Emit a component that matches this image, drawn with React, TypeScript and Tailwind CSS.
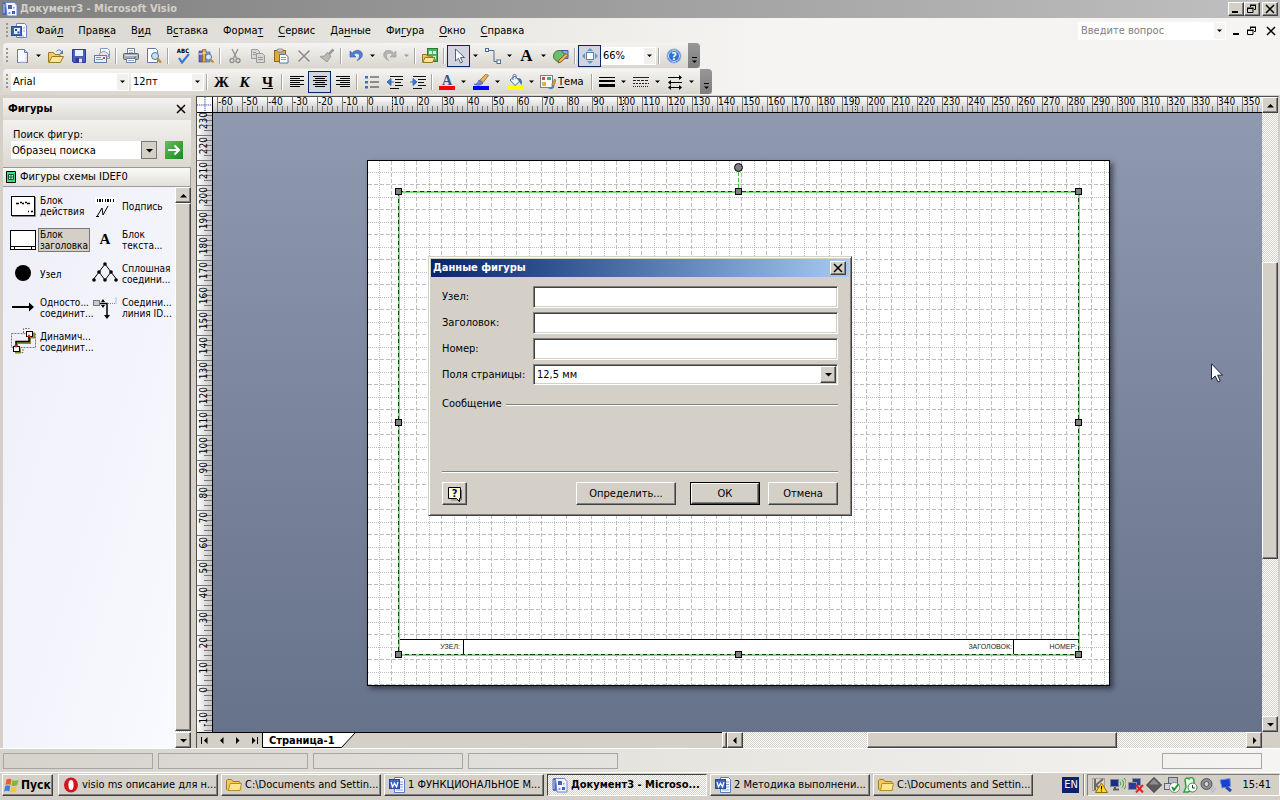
import React from 'react';
import clsx from 'clsx';

const RAISED = 'bg-[#d4d0c8] border border-t-white border-l-white border-r-[#404040] border-b-[#404040] shadow-[inset_-1px_-1px_0_#808080]';
const DITHER = 'bg-[repeating-conic-gradient(#ffffff_0_25%,#d4d0c8_0_50%)] bg-[length:2px_2px]';

/* ---------- Icons ---------- */

const ICONS: Record<string, React.ReactNode> = {
  visio: (
    <>
      <rect x="0.500" y="1" width="11" height="13" rx="2" fill="#4a66bd" />
      <path d="M2 3v9" stroke="#c3cff5" />
      <path d="M3.500 1.500h9l2.500 3v10.500h-10z" fill="#f4f6ff" stroke="#6f86cc" />
      <rect x="6" y="4" width="4" height="4" fill="#4460b4" />
      <rect x="10" y="10" width="3" height="3" fill="#4460b4" />
      <rect x="6.500" y="11" width="2" height="2" fill="#7b93dd" />
      <rect x="11" y="6" width="1.500" height="1.500" fill="#7b93dd" />
    </>
  ),
  visioDoc: (
    <>
      <path d="M5.500 .5h8l2 2v12h-10z" fill="#fff" stroke="#6b84c6" />
      <path d="M12 5h2M12 8h2M8 13h5" stroke="#8ea3da" />
      <rect x="0.500" y="3.500" width="10" height="9" fill="#3d62b6" stroke="#2d4d9a" />
      <rect x="3" y="5" width="6" height="6" fill="#e7edff" />
      <rect x="4" y="6" width="2" height="2" fill="#2d4d9a" />
      <rect x="6.500" y="8.500" width="2" height="2" fill="#2d4d9a" />
    </>
  ),
  page: (
    <>
      <path d="M3.500 1.500h7l3 3v10h-10z" fill="#fff" stroke="#5d7ba8" />
      <path d="M10.500 1.500v3h3" fill="#cbd9ee" stroke="#5d7ba8" />
      <path d="M12 6v8H5" fill="none" stroke="#c3d3ec" />
    </>
  ),
  open: (
    <>
      <path d="M.5 14V4.500h5l1.500 2h5V9" fill="#f0cc62" stroke="#9a7a26" />
      <path d="M.8 14.500 4 8.500h11.500l-3.200 6z" fill="#ffe596" stroke="#9a7a26" />
      <path d="M8.500 3.500c2-2.500 4-2 5 .5" fill="none" stroke="#4b77b5" />
      <path d="M15 2v4h-3.500z" fill="#4b77b5" />
    </>
  ),
  save: (
    <>
      <path d="M1.500 1.500h13v13h-12l-1-1z" fill="#4c5ec4" stroke="#2e3c92" />
      <rect x="4" y="2" width="8" height="6" fill="#eef1fb" />
      <rect x="4.500" y="10" width="7" height="4.500" fill="#2e3c92" />
      <rect x="8" y="10.500" width="3" height="4" fill="#e3e6f5" />
    </>
  ),
  mail: (
    <>
      <path d="M6.500 .5h7l2 2v8h-9z" fill="#fff" stroke="#8499bd" />
      <path d="M5.500 5.500 10 3l4.500 3v3h-9z" fill="#f9e1d6" stroke="#8499bd" />
      <rect x="0.500" y="7.500" width="12" height="7" fill="#e9f0fb" stroke="#5d7ba8" />
      <path d="M2 9.500h5M2 11.500h7" stroke="#7e98c3" />
      <rect x="9" y="9" width="2" height="2" fill="#cf4a35" />
    </>
  ),
  print: (
    <>
      <path d="M4.500 6V.5h7V6" fill="#fff" stroke="#71809c" />
      <path d="M6 2.500h4M6 4.500h4" stroke="#9fb0cb" />
      <rect x="0.500" y="5.500" width="15" height="6" rx="1" fill="#a9adb6" stroke="#5d6470" />
      <path d="M2 7.500h12" stroke="#dcdfe5" />
      <rect x="11" y="8.500" width="2" height="1.500" fill="#43b049" />
      <path d="M3.500 10.500h9v4h-9z" fill="#fff" stroke="#71809c" />
      <path d="M5 12.500h6" stroke="#8fa6d0" />
    </>
  ),
  preview: (
    <>
      <path d="M1.500 .5h8l2 2v12h-10z" fill="#fff" stroke="#5d7ba8" />
      <circle cx="9" cy="8" r="3.500" fill="#c5e3f7" stroke="#53718f" />
      <path d="m11.500 10.800 3.500 3.700" stroke="#c68a2e" strokeWidth="2.500" />
    </>
  ),
  research: (
    <>
      <path d="M1 3h3.500v11H1z" fill="#6f62c7" stroke="#42388c" strokeWidth=".7" />
      <path d="M4.500 1.500H8V14H4.500z" fill="#e7a93f" stroke="#8e6216" strokeWidth=".7" />
      <path d="M8 4h4v10H8z" fill="#86a9e4" stroke="#40639f" strokeWidth=".7" />
      <path d="M1 6h3.500M4.500 5H8" stroke="#fff" />
      <circle cx="10.500" cy="9" r="3" fill="#d7ecfa" stroke="#53718f" />
      <path d="m12.500 11.500 3 3" stroke="#c68a2e" strokeWidth="2" />
    </>
  ),
  cut: (
    <g fill="none" stroke="#8f8f8f" strokeWidth="1.300">
      <path d="M5 1l4.500 9M11 1 6.500 10" />
      <circle cx="5" cy="12.500" r="2" />
      <circle cx="11" cy="12.500" r="2" />
    </g>
  ),
  copy: (
    <g fill="#d6d6d6" stroke="#999">
      <path d="M1.500 1.500h6l2 2v7h-8z" />
      <path d="M6.500 5.500h6l2 2v7h-8z" />
      <path d="M3 4.500h3M3 6.500h3M8 9.500h5M8 11.500h5" />
    </g>
  ),
  paste: (
    <>
      <rect x="1.500" y="2.500" width="11" height="11" fill="#e0a93c" stroke="#8e6a1f" />
      <rect x="4" y="1" width="6" height="3" rx="1" fill="#c9ccd2" stroke="#6a6f79" strokeWidth=".7" />
      <path d="M6.500 6.500h6l2.500 2v6.500H6.500z" fill="#fff" stroke="#5472a8" />
      <path d="M8 9.500h5M8 11.500h5" stroke="#7f9bd0" />
    </>
  ),
  del: <path d="m2.500 2.500 11 11m0-11-11 11" stroke="#8b8b8b" strokeWidth="1.500" />,
  brush: (
    <>
      <path d="m14.500 1.500-5 5" stroke="#999" strokeWidth="2.500" />
      <path d="M8 4.500 12 8l-4 6-7-5.500 4.500-.5z" fill="#b9b9b9" stroke="#9b9b9b" />
    </>
  ),
  undo: <path d="M2 3v6h6L5.700 6.700C8 4.500 11 5 11.500 7.500c.3 2-1 3.500-2.500 5 4-1.500 6-4 5.200-7.200C13 1.800 7.500 1 4.200 5z" fill="#4f7fd0" stroke="#2f5aa8" strokeWidth=".6" />,
  redo: <path d="M14 3v6H8l2.300-2.300C8 4.500 5 5 4.500 7.500c-.3 2 1 3.500 2.500 5C3 11 1 8.500 1.800 5.300 3 1.800 8.500 1 11.800 5z" fill="#b3b3b3" stroke="#9d9d9d" strokeWidth=".6" />,
  shapes: (
    <>
      <rect x="5.500" y="0.500" width="10" height="13" fill="#4db35e" stroke="#257a36" />
      <path d="M7 3h3v3H7zM11 3h3v3h-3zM11 8h3v3h-3z" fill="#d8f2dc" />
      <path d="M.5 14V6.500h4l1 1.500H10V10" fill="#efc554" stroke="#94741f" />
      <path d="m.8 14.500 2.200-5h10l-2.500 5z" fill="#ffe596" stroke="#94741f" />
    </>
  ),
  pointer: <path d="M4.500 1v12l3-2.800 2 4.800 2-1-2-4.500h4z" fill="#fff" stroke="#50617f" />,
  connector: (
    <>
      <path d="M3.500 2.500H9v11h3" fill="none" stroke="#4e6d95" />
      <rect x="0.500" y="0.500" width="3" height="3" fill="#fff" stroke="#4e6d95" />
      <rect x="12" y="12" width="3.500" height="3.500" fill="#fff" stroke="#4e6d95" />
    </>
  ),
  drawing: (
    <>
      <path d="M8 2.500h7v8H8z" fill="#8aa7e0" stroke="#3b5ca5" />
      <circle cx="6" cy="8" r="5.500" fill="#6bbd70" stroke="#2e7f36" />
      <path d="m5 15 1-3 7-6.500 2 2L8 14z" fill="#edb660" stroke="#8b5d1e" />
    </>
  ),
  pan: (
    <g fill="#5f97cf">
      <rect x="4.500" y="4.500" width="7" height="7" fill="#fff" stroke="#5f7da5" />
      <path d="M8 0l3 3H5zM8 16l3-3H5zM0 8l3-3v6zM16 8l-3-3v6z" />
    </g>
  ),
  bullets: (
    <>
      <path d="M6 3h9M6 8h9M6 13h9" stroke="#333" />
      <path d="M1 2h3v2.500H1zM1 7h3v2.500H1zM1 12h3v2.500H1z" fill="#3d6fc0" />
    </>
  ),
  outdent: (
    <>
      <path d="M3 2.500h13M8 5.500h8M8 8.500h6M8 11.500h8M3 14.500h9" stroke="#111" />
      <path d="M0 8 4 4.500v7zM3 8h4" fill="#3974c8" stroke="#3974c8" />
    </>
  ),
  indent: (
    <>
      <path d="M3 2.500h13M8 5.500h8M8 8.500h6M8 11.500h8M3 14.500h9" stroke="#111" />
      <path d="M7 8 3 4.500v7zM0 8h4" fill="#3974c8" stroke="#3974c8" />
    </>
  ),
  lineColor: (
    <>
      <path d="M1 10c2 1 4-1 5-4l4 3c-2 2.500-6 3-9 1z" fill="#5d8fd8" stroke="#2c5390" strokeWidth=".6" />
      <path d="m7 6 6-6 2.500 1.500-5.500 7z" fill="#e7b25a" stroke="#7c602b" strokeWidth=".7" />
      <rect y="12" width="16" height="4" fill="#00f" />
    </>
  ),
  fill: (
    <>
      <path d="m3 6 5-4 5 5-5 4.500z" fill="#eef3fa" stroke="#54709b" />
      <path d="M6 6V1.500c0-1.500 3-1.500 3 0V5" fill="none" stroke="#54709b" />
      <path d="M12 4c3 1 3.500 4 2.500 7C13 9 13 8 10 5z" fill="#3c70c0" />
      <rect y="12" width="16" height="4" fill="#ff0" />
    </>
  ),
  theme: (
    <>
      <rect x="0.500" y="1.500" width="12" height="12" fill="#fff" stroke="#69809f" />
      <rect x="2" y="3" width="3" height="3" fill="#d94b3a" />
      <rect x="7" y="3" width="4" height="3" fill="#58a85c" />
      <rect x="2" y="8" width="4" height="4" fill="#e5b143" />
      <path d="M7 14c2 1 4 .5 5-3l2.500 1.500c-1 3-5 3.500-7.500 1.500z" fill="#4c80cf" />
      <path d="m11.500 11 3-6 1.500 1-2 6z" fill="#d99d43" stroke="#7c602b" strokeWidth=".5" />
    </>
  ),
  lineWeight: (
    <g fill="#000">
      <rect x="0" y="3" width="16" height="1" />
      <rect x="0" y="6" width="16" height="2" />
      <rect x="0" y="10" width="16" height="3" />
    </g>
  ),
  linePattern: (
    <g stroke="#222">
      <path d="M0 3.500h16" />
      <path d="M0 6.500h16" strokeDasharray="3 1" />
      <path d="M0 9.500h16" strokeDasharray="2 1" />
      <path d="M0 12.500h16" strokeDasharray="1 1" />
    </g>
  ),
  lineEnds: (
    <g stroke="#000" fill="#000">
      <path d="M1 3.500h13M2 8.500h13M2 13.500h12" />
      <path d="m12 1 3 2.500L12 6zM4 6 1 8.500 4 11zM4 11l-3 2.500L4 16zM12 11l3 2.500-3 2.500z" stroke="none" />
    </g>
  ),
  word: (
    <>
      <path d="M5.500 .5h8l2 2v13h-10z" fill="#fff" stroke="#5c7dbd" />
      <path d="M11 5h3M11 7.500h3M11 10h3M7 13h7" stroke="#7e9bd3" />
      <rect x="0.500" y="2.500" width="10" height="9" fill="#3d69bc" stroke="#27498f" />
      <path d="m2 5 1.500 5L5.500 6l2 4L9 5" fill="none" stroke="#fff" strokeWidth="1.200" />
    </>
  ),
  folder: (
    <>
      <path d="M.5 12V3.500l1-1h4l1.500 2h6.500l.5 1v8h-12z" fill="#f3cb55" stroke="#a37c1d" />
      <path d="M2.500 13.500 4 6.500h11.500l-1.500 7z" fill="#ffe68c" stroke="#b58d2a" />
    </>
  ),
  opera: (
    <>
      <ellipse cx="8" cy="8" rx="7" ry="7.500" fill="#d3131d" />
      <ellipse cx="8" cy="8" rx="2.600" ry="5" fill="#fff" />
    </>
  ),
  windows: (
    <>
      <path d="M2.500 2.500C4 1.500 6 1.500 7.500 2.500L6.500 8C5 7 3 7 1.500 8z" fill="#ea5b2d" />
      <path d="M8.500 3C10 4 12 4 14.500 2.800L13.300 8.200c-2 1-4 1-5.800.2z" fill="#7db83b" />
      <path d="M1.300 9c1.500-1 3.500-1 5 0l-1 5.500c-1.500-1-3.500-1-5.200 0z" fill="#3f7fe0" />
      <path d="M7.300 9.400c1.500.9 3.500.9 5.700-.2l-1.200 5.500c-2 1-4 1-5.500.2z" fill="#f6c82f" />
    </>
  ),
  trayK: (
    <>
      <rect x="0.500" y="1.500" width="12" height="12" fill="#d8d5ce" stroke="#a5a29a" />
      <path d="M3 2v11M11 2 4 8l5 5" stroke="#6c6a66" strokeWidth="2" fill="none" />
      <path d="M9.500 6 15.500 15.500h-12z" fill="#ffd52e" stroke="#8b6e0b" />
      <path d="M9.500 9v3.500M9.500 13.500v1" stroke="#000" />
    </>
  ),
  trayNet: (
    <>
      <rect x="0.500" y="2.500" width="8" height="7" fill="#1b2f88" stroke="#7f8593" />
      <path d="M3 12.500h6M5 10v2" stroke="#5a6070" strokeWidth="2" />
      <path d="M10 4.500c1 1 1 3 0 4M12 2.500c2 2 2 6 0 8M14 1c3 3 3 8 0 11" fill="none" stroke="#2ca334" />
    </>
  ),
  trayOff: (
    <>
      <rect x="4.500" y="1.500" width="8" height="7" fill="#2a3b9a" stroke="#8b90a0" />
      <rect x="0.500" y="5.500" width="8" height="7" fill="#2a3b9a" stroke="#8b90a0" />
      <path d="m8 8 7 7.500M15 8l-7 7.500" stroke="#e0231d" strokeWidth="2" />
    </>
  ),
  trayDiamond: (
    <>
      <path d="m8 .5 7.500 7.500L8 15.500.5 8z" fill="#5b5b5b" stroke="#3a3a3a" />
      <path d="m8 2 5 5.500H3z" fill="#8e8e8e" />
    </>
  ),
  trayCheck: (
    <>
      <rect x="4.500" y="0.500" width="9" height="8" fill="#b8bcc4" stroke="#5f636c" />
      <rect x="0.500" y="6.500" width="8" height="6" fill="#d5d7dc" stroke="#5f636c" />
      <circle cx="10.500" cy="10.500" r="5" fill="#fff" stroke="#888" />
      <path d="m8 10 2 3 4.500-6" fill="none" stroke="#1e9a2a" strokeWidth="2" />
    </>
  ),
  trayClock: (
    <>
      <path d="M3 3c1-3 3-2 4-1 1-2 4-2 5 1v3c-1 5-3 8-6 9H2l2-5z" fill="#e9f8ea" stroke="#2ba33b" strokeWidth="1.500" />
      <circle cx="10.500" cy="10.500" r="4.500" fill="#fff" stroke="#2a8f3b" />
      <path d="M10.500 8v3h2.500" fill="none" stroke="#333" />
    </>
  ),
  traySound: (
    <>
      <circle cx="6.500" cy="7" r="5.500" fill="#8d8f94" stroke="#55575c" />
      <circle cx="6.500" cy="7" r="2.500" fill="#d5d6d9" stroke="#55575c" />
      <path d="M10 13c2-.5 3-2 3.500-4M11.500 15c2-.5 3.500-2 4-4" fill="none" stroke="#9fa8d8" />
    </>
  ),
  trayPc: (
    <>
      <path d="m2 3 10-1.500.5 8L4 11z" fill="#1741d2" stroke="#7f93d6" />
      <path d="m8 10 5 4" stroke="#2947b5" strokeWidth="3" />
    </>
  ),
};

const Icon: React.FC<{ name: string; className?: string }> = ({ name, className }) => (
  <svg viewBox="0 0 16 16" className={clsx('size-4 shrink-0', className)} aria-hidden="true">
    {ICONS[name]}
  </svg>
);

const Arrow: React.FC<{ dir?: 'up' | 'down' | 'left' | 'right'; small?: boolean; color?: string }> = ({ dir = 'down', small, color = '#000' }) => {
  const paths = { down: 'M0 2h7L3.500 5.500z', up: 'M0 5.500h7L3.500 2z', left: 'M5.500 0v7L2 3.500z', right: 'M2 0v7l3.500-3.500z' };
  return (
    <svg viewBox="0 0 7 7" className={clsx('shrink-0', small ? 'size-[5px]' : 'size-[7px]')} aria-hidden="true">
      <path d={paths[dir]} fill={color} />
    </svg>
  );
};

/* ---------- Toolbar parts ---------- */

const Tool: React.FC<{ label: string; active?: boolean; children: React.ReactNode }> = ({ label, active, children }) => (
  <button
    aria-label={label}
    className={clsx('flex h-[22px] w-[23px] shrink-0 items-center justify-center', active && 'border border-[#0a246a] bg-[#d2d5df]')}
  >
    {children}
  </button>
);

const Drop: React.FC<{ label: string; disabled?: boolean }> = ({ label, disabled }) => (
  <button aria-label={label} className="flex h-[22px] w-[11px] shrink-0 items-center justify-center">
    <Arrow small color={disabled ? '#999' : '#000'} />
  </button>
);

const Sep = () => <div className="mx-[2px] h-4 w-[2px] shrink-0 border-l border-[#a6a6a6] border-r border-r-white" />;

const Grip = () => (
  <div className="ml-[3px] mr-[2px] h-4 w-[2px] shrink-0 bg-[repeating-linear-gradient(#9a978f_0_2px,transparent_2px_4px)]" />
);

const Overflow = () => (
  <button aria-label="Параметры панели" className="ml-[3px] flex h-[25px] w-[12px] shrink-0 flex-col items-center justify-end gap-px rounded-r bg-linear-to-b from-[#979797] to-[#7d7d7d] pb-1">
    <span className="h-px w-[5px] bg-black" />
    <Arrow small />
  </button>
);

interface ComboProps {
  label: string;
  value: string;
  className?: string;
}

const Combo: React.FC<ComboProps> = ({ label, value, className }) => (
  <div className={clsx('relative h-[18px] shrink-0 bg-white', className)}>
    <select aria-label={label} className="h-full w-full appearance-none bg-transparent pl-[2px] outline-none">
      <option>{value}</option>
    </select>
    <span className="pointer-events-none absolute inset-y-px right-px flex w-[11px] items-center justify-center bg-[#f1f0ed]">
      <Arrow small />
    </span>
  </div>
);

const toolbarClass = 'flex h-[25px] w-fit items-center rounded-l bg-linear-to-b from-[#f5f4f2] to-[#d9d6ce]';

const MENU: [string, string, string][] = [
  ['Фай', 'л', ''],
  ['Прав', 'к', 'а'],
  ['В', 'и', 'д'],
  ['В', 'с', 'тавка'],
  ['Форма', 'т', ''],
  ['', 'С', 'ервис'],
  ['Да', 'н', 'ные'],
  ['Фи', 'г', 'ура'],
  ['', 'О', 'кно'],
  ['', 'С', 'правка'],
];

const MinimizeGlyph = () => <svg viewBox="0 0 10 10" className="size-[10px]"><path d="M1 7h6v2H1z" /></svg>;
const RestoreGlyph = () => (
  <svg viewBox="0 0 10 10" className="size-[10px]">
    <path d="M3.500 3V1.500h5v4H7M.5 4.500h5.500v4H.5z" fill="none" stroke="#000" />
    <path d="M3 .5h6v1.500H3zM0 3.500h6.500V5H0z" />
  </svg>
);
const CloseGlyph = () => <svg viewBox="0 0 10 10" className="size-[10px]"><path d="m1 1 8 8m0-8-8 8" stroke="#000" strokeWidth="1.500" /></svg>;

const TitleBar = () => (
  <header className="flex h-[18px] shrink-0 items-center bg-linear-to-r from-[#808080] to-[#c0c0c0] pl-[2px] pr-[2px]">
    <Icon name="visio" />
    <h1 className="ml-[2px] flex-1 font-bold text-[#d4d0c8]">Документ3 - Microsoft Visio</h1>
    <button aria-label="Свернуть" className={clsx(RAISED, 'flex h-[14px] w-4 items-center justify-center')}><MinimizeGlyph /></button>
    <button aria-label="Восстановить" className={clsx(RAISED, 'flex h-[14px] w-4 items-center justify-center')}><RestoreGlyph /></button>
    <button aria-label="Закрыть" className={clsx(RAISED, 'ml-[2px] flex h-[14px] w-4 items-center justify-center')}><CloseGlyph /></button>
  </header>
);

const MenuBar = () => (
  <nav className="flex h-[25px] shrink-0 items-center pl-[3px]">
    <Grip />
    <Icon name="visioDoc" className="ml-px" />
    <div className="flex flex-1 gap-px pl-[2px]">
      {MENU.map(([a, b, c]) => (
        <button key={a + b + c} className="px-[7px]">
          {a}<span className="underline underline-offset-2">{b}</span>{c}
        </button>
      ))}
    </div>
    <div className="relative h-[18px] w-[148px] bg-white">
      <input aria-label="Введите вопрос" placeholder="Введите вопрос" className="h-full w-full bg-transparent pl-[3px] outline-none placeholder:text-[#808080]" />
      <span className="pointer-events-none absolute inset-y-px right-px flex w-[11px] items-center justify-center bg-[#f5f4f2]">
        <Arrow small />
      </span>
    </div>
    <div className="flex gap-[3px] pl-[5px] pr-[3px]">
      <button aria-label="Свернуть документ" className="p-px"><MinimizeGlyph /></button>
      <button aria-label="Восстановить документ" className="p-px"><RestoreGlyph /></button>
      <button aria-label="Закрыть документ" className="py-px pl-[5px] pr-px"><CloseGlyph /></button>
    </div>
  </nav>
);

const StandardToolbar = () => (
  <div className={toolbarClass}>
    <Grip />
    <Tool label="Создать"><Icon name="page" /></Tool>
    <Drop label="Создать: список" />
    <Tool label="Открыть"><Icon name="open" /></Tool>
    <Tool label="Сохранить"><Icon name="save" /></Tool>
    <Tool label="Сообщение"><Icon name="mail" /></Tool>
    <Sep />
    <Tool label="Печать"><Icon name="print" /></Tool>
    <Tool label="Просмотр"><Icon name="preview" /></Tool>
    <Sep />
    <Tool label="Орфография">
      <svg viewBox="0 0 16 16" className="size-4">
        <text x="8" y="5" fontSize="6" fontWeight="bold" textAnchor="middle">ABC</text>
        <path d="m4 10 3 4.500L14 6" fill="none" stroke="#3c76cf" strokeWidth="2.200" />
      </svg>
    </Tool>
    <Tool label="Справочные материалы"><Icon name="research" /></Tool>
    <Sep />
    <Tool label="Вырезать"><Icon name="cut" /></Tool>
    <Tool label="Копировать"><Icon name="copy" /></Tool>
    <Tool label="Вставить"><Icon name="paste" /></Tool>
    <Tool label="Удалить"><Icon name="del" /></Tool>
    <Tool label="Формат по образцу"><Icon name="brush" /></Tool>
    <Sep />
    <Tool label="Отменить"><Icon name="undo" /></Tool>
    <Drop label="Отменить: список" />
    <Tool label="Вернуть"><Icon name="redo" /></Tool>
    <Drop label="Вернуть: список" disabled />
    <Sep />
    <Tool label="Фигуры"><Icon name="shapes" /></Tool>
    <Sep />
    <Tool label="Указатель" active><Icon name="pointer" /></Tool>
    <Drop label="Указатель: список" />
    <Tool label="Соединительная линия"><Icon name="connector" /></Tool>
    <Drop label="Соединительная линия: список" />
    <Tool label="Текст"><span className="font-['Liberation_Serif',serif] text-[17px] font-bold leading-4">A</span></Tool>
    <Drop label="Текст: список" />
    <Tool label="Рисование"><Icon name="drawing" /></Tool>
    <Sep />
    <Tool label="Панорама" active><Icon name="pan" /></Tool>
    <Combo label="Масштаб" value="66%" className="w-[55px]" />
    <Sep />
    <Tool label="Справка">
      <svg viewBox="0 0 16 16" className="size-4">
        <circle cx="8" cy="8" r="7" fill="#2f6fd0" stroke="#9ab8e6" />
        <circle cx="8" cy="8" r="5.500" fill="none" stroke="#fff" strokeWidth=".8" />
        <text x="8" y="12" fontSize="11" fontWeight="bold" textAnchor="middle" fill="#fff">?</text>
      </svg>
    </Tool>
    <Overflow />
  </div>
);

const AlignIcon: React.FC<{ d: string }> = ({ d }) => (
  <svg viewBox="0 0 16 16" className="size-4"><path d={d} stroke="#000" shapeRendering="crispEdges" /></svg>
);

const FormatToolbar = () => (
  <div className={toolbarClass}>
    <Grip />
    <Combo label="Шрифт" value="Arial" className="mx-px w-[118px]" />
    <Combo label="Размер" value="12пт" className="ml-px w-[73px]" />
    <Sep />
    <Tool label="Полужирный"><span className="font-['Liberation_Serif',serif] text-[15px] font-bold">Ж</span></Tool>
    <Tool label="Курсив"><span className="font-['Liberation_Serif',serif] text-[15px] font-bold italic">К</span></Tool>
    <Tool label="Подчеркнутый"><span className="font-['Liberation_Serif',serif] text-[15px] font-bold underline">Ч</span></Tool>
    <Sep />
    <Tool label="По левому краю"><AlignIcon d="M1 2.500h14M1 4.500h10M1 6.500h14M1 8.500h10M1 10.500h14M1 12.500h10" /></Tool>
    <Tool label="По центру" active><AlignIcon d="M1 2.500h14M3 4.500h10M1 6.500h14M3 8.500h10M1 10.500h14M3 12.500h10" /></Tool>
    <Tool label="По правому краю"><AlignIcon d="M1 2.500h14M5 4.500h10M1 6.500h14M5 8.500h10M1 10.500h14M5 12.500h10" /></Tool>
    <Sep />
    <Tool label="Маркеры"><Icon name="bullets" /></Tool>
    <Tool label="Уменьшить отступ"><Icon name="outdent" /></Tool>
    <Tool label="Увеличить отступ"><Icon name="indent" /></Tool>
    <Sep />
    <Tool label="Цвет текста">
      <svg viewBox="0 0 16 16" className="size-4">
        <text x="8" y="11" fontSize="14" fontWeight="bold" textAnchor="middle" fill="#32558f" className="font-['Liberation_Serif',serif]">A</text>
        <rect y="12" width="16" height="4" fill="#f00" />
      </svg>
    </Tool>
    <Drop label="Цвет текста: список" />
    <Tool label="Цвет линии"><Icon name="lineColor" /></Tool>
    <Drop label="Цвет линии: список" />
    <Tool label="Цвет заливки"><Icon name="fill" /></Tool>
    <Drop label="Цвет заливки: список" />
    <button className="flex h-[22px] w-[52px] items-center gap-[2px] pl-[3px]">
      <Icon name="theme" />
      <span><span className="underline underline-offset-2">Т</span>ема</span>
    </button>
    <Sep />
    <Tool label="Толщина линии"><Icon name="lineWeight" /></Tool>
    <Drop label="Толщина линии: список" />
    <Tool label="Тип линии"><Icon name="linePattern" /></Tool>
    <Drop label="Тип линии: список" />
    <Tool label="Концы линии"><Icon name="lineEnds" /></Tool>
    <Drop label="Концы линии: список" />
    <Overflow />
  </div>
);

/* ---------- Shapes panel ---------- */

interface ShapeItem {
  lines: string[];
  selected?: boolean;
  art: React.ReactNode;
}

const SHAPES: ShapeItem[] = [
  {
    lines: ['Блок', 'действия'],
    art: (
      <>
        <rect x="1.500" y="4.500" width="23" height="19" fill="#fff" stroke="#000" />
        <path d="M2 24.500h23.500V5" fill="none" stroke="#888" />
        <path d="M6 11.500h3m1-1h2m0 1h2m1-1h2m0 1h3M18 19.500h1m2 0h2" stroke="#000" strokeWidth="1.500" />
      </>
    ),
  },
  {
    lines: ['Подпись'],
    art: (
      <>
        <path d="M3 5h21v7H3z" fill="#fff" />
        <path d="M5 8.500h18" stroke="#000" strokeWidth="3" strokeDasharray="1 1 2 1 1 2" />
        <path d="M5 24.500 10 16l1 7 5-9M4 24.500h3" fill="none" stroke="#000" />
      </>
    ),
  },
  {
    lines: ['Блок', 'заголовка'],
    selected: true,
    art: (
      <>
        <rect x="0.500" y="4.500" width="25" height="19" fill="#fff" stroke="#000" />
        <path d="M1 20.500h24M4.500 20v4M21.500 20v4" stroke="#000" />
      </>
    ),
  },
  {
    lines: ['Блок', 'текста...'],
    art: <text x="13" y="18" fontSize="15" fontWeight="bold" textAnchor="middle" className="font-['Liberation_Serif',serif]">A</text>,
  },
  { lines: ['Узел'], art: <circle cx="13" cy="13" r="8" /> },
  {
    lines: ['Сплошная', 'соедини...'],
    art: (
      <>
        <path d="M13 4 1 20M13 4l12 16M7 12l6 8M19 12l-6 8" stroke="#000" fill="none" />
        {[[13, 4], [7, 12], [19, 12], [2, 20], [13, 20], [24, 20]].map(([x, y]) => <circle key={`${x}-${y}`} cx={x} cy={y} r="1.800" />)}
      </>
    ),
  },
  {
    lines: ['Односто...', 'соединит...'],
    art: <path d="M2 12h17V8.500l5 4.500-5 4.500V14H2z" />,
  },
  {
    lines: ['Соедини...', 'линия ID...'],
    art: (
      <>
        <rect x="1.500" y="6.500" width="6" height="5" fill="#ccc" stroke="#777" />
        <path d="M16 9.500h8V3" fill="none" stroke="#888" strokeDasharray="1 1" />
        <path d="M8 9.500h7V23" fill="none" stroke="#000" strokeWidth="1.500" />
        <path d="m12 21 3 4 3-4zM9 8l2-3 2 3zM9 11l2 3 2-3z" />
      </>
    ),
  },
  {
    lines: ['Динамич...', 'соединит...'],
    art: (
      <>
        <path d="M1.500 5.500h24v14h-24zM13.500 5V.5h6M7 20v4.500h6V20" fill="none" stroke="#777" strokeDasharray="2 1" />
        <path d="M20 9v6H7v4" fill="none" stroke="#8a8a30" strokeWidth="2" />
        <path d="M18 4.500h7v6h-7zM5 20.500h6v5H5z" fill="#8a8a30" />
        <path d="M19 8v5.500H6V19" fill="none" stroke="#000" strokeWidth="1.500" />
        <rect x="16.500" y="3.500" width="6" height="5" fill="#fff" stroke="#000" />
        <rect x="3.500" y="18.500" width="6" height="5" fill="#fff" stroke="#000" />
        <path d="m17 9 2-3 2 3zM4 17h4l-2 3z" fill="#e02020" />
      </>
    ),
  },
];

interface ScrollButtonProps {
  dir: 'up' | 'down' | 'left' | 'right';
  label: string;
}

const ScrollButton: React.FC<ScrollButtonProps> = ({ dir, label }) => (
  <button aria-label={label} className={clsx(RAISED, 'flex size-4 shrink-0 items-center justify-center')}>
    <Arrow dir={dir} />
  </button>
);

const ShapesPanel = () => (
  <aside className="ml-[3px] mt-[3px] flex w-[188px] shrink-0 flex-col">
    <div className="flex h-[22px] shrink-0 items-center justify-between bg-linear-to-b from-[#f5f4f2] to-[#dedbd4] px-[5px]">
      <h2 className="font-bold">Фигуры</h2>
      <button aria-label="Закрыть панель"><CloseGlyph /></button>
    </div>
    <div className="flex h-[47px] shrink-0 flex-col bg-linear-to-b from-[#f2f1ee] to-[#dbd8d1] px-2 pt-2">
      <label htmlFor="shape-search" className="pl-[2px] leading-[13px]">Поиск фигур:</label>
      <div className="flex items-center">
        <div className="relative h-[18px] w-[146px] bg-white">
          <input id="shape-search" defaultValue="Образец поиска" className="h-full w-full bg-transparent pl-px pr-4 outline-none" />
          <span className="pointer-events-none absolute inset-y-0 right-0 flex w-4 items-center justify-center border border-[#777] bg-[#d4d0c8]">
            <Arrow />
          </span>
        </div>
        <button aria-label="Найти" className="ml-2 flex size-[18px] items-center justify-center bg-linear-to-br from-[#5ec25c] to-[#118a1d]">
          <svg viewBox="0 0 14 14" className="size-[14px]"><path d="M1 7h11M7.500 2.500 12 7l-4.500 4.500" fill="none" stroke="#fff" strokeWidth="2" /></svg>
        </button>
      </div>
    </div>
    <button className="flex h-5 shrink-0 items-center gap-1 border-b border-r border-t border-[#999] bg-linear-to-b from-[#fafaf9] to-[#e2e0da] pl-[3px]">
      <svg viewBox="0 0 10 12" className="h-3 w-[10px]">
        <path d="M.5 .5h9v11h-9z" fill="#3fe07c" stroke="#000" />
        <path d="M2.500 3.500h5v5h-5zM5 3.500v5M2 6h6" fill="#d5f7e0" stroke="#0a5a2a" />
      </svg>
      Фигуры схемы IDEF0
    </button>
    <div className="flex min-h-0 flex-1">
      <ul className="grid flex-1 auto-rows-[34px] grid-cols-[82px_1fr] content-start overflow-hidden bg-linear-to-br from-[#eeeef8] to-[#f8fafe] pl-[7px] pt-[2px]">
        {SHAPES.map((shape) => (
          <li key={shape.lines.join(' ')} className="flex items-center gap-[2px]">
            <svg viewBox="0 0 26 28" className="h-7 w-[26px] shrink-0" aria-hidden="true">{shape.art}</svg>
            <span className={clsx('whitespace-nowrap border px-px text-[10px] leading-[11px]', shape.selected ? 'border-[#777] bg-[#d4d0c8]' : 'border-transparent')}>
              {shape.lines.map((line) => <span key={line} className="block">{line}</span>)}
            </span>
          </li>
        ))}
      </ul>
      <div className={clsx('flex w-4 flex-col', DITHER)}>
        <ScrollButton dir="up" label="Прокрутить фигуры вверх" />
        <div className={clsx(RAISED, 'mb-px flex-1')} />
        <ScrollButton dir="down" label="Прокрутить фигуры вниз" />
      </div>
    </div>
  </aside>
);

/* ---------- Rulers ---------- */

const STEP = 25;

const HorizontalRuler = () => {
  const zero = 154;
  const marks = Array.from({ length: 42 }, (_, i) => i - 6);
  const ticks = Array.from({ length: 210 }, (_, i) => zero - 150 + i * 5);
  return (
    <div className="h-4 min-w-0 flex-1 overflow-hidden border-b border-black bg-linear-to-b from-white to-[#c4c4c4]">
      <svg className="h-4 w-full" shapeRendering="crispEdges">
        {ticks.map((x) => <path key={x} d={`M${x + 0.5} 9v6`} stroke="#777" />)}
        {marks.map((n) => (
          <g key={n}>
            <path d={`M${zero + n * STEP + 0.5} 0v15`} stroke="#777" />
            <text x={zero + n * STEP + 1} y="8" fontSize="10">{n * 10}</text>
          </g>
        ))}
        <path d="M410.500 0v15M642.500 0v15M179.500 0v15" stroke="#000" strokeDasharray="1 2" />
      </svg>
    </div>
  );
};

const VerticalRuler = () => {
  const zero = 572;
  const marks = Array.from({ length: 25 }, (_, i) => i - 1);
  const ticks = Array.from({ length: 160 }, (_, i) => zero + 100 - i * 5);
  return (
    <div className="w-4 shrink-0 overflow-hidden border-r border-black bg-linear-to-r from-white to-[#c4c4c4]">
      <svg className="h-full w-4" shapeRendering="crispEdges">
        {ticks.map((y) => <path key={y} d={`M7 ${y + 0.5}h9`} stroke="#777" />)}
        {marks.map((n) => (
          <g key={n}>
            <path d={`M0 ${zero - n * STEP + 0.5}h16`} stroke="#777" />
            <text transform={`translate(10 ${zero - n * STEP + 2}) rotate(-90)`} fontSize="10" textAnchor="end">{n * 10}</text>
          </g>
        ))}
      </svg>
    </div>
  );
};

/* ---------- Drawing page ---------- */

const HANDLES = [[30, 30], [370, 30], [710, 30], [30, 261], [710, 261], [30, 493], [370, 493], [710, 493]];

const DrawingPage = () => (
  <svg className="absolute left-[154px] top-[47px] h-[526px] w-[743px] shadow-[3px_3px_5px_rgba(20,25,40,0.6)]" viewBox="0 0 743 526" role="img" aria-label="Страница-1">
    <g shapeRendering="crispEdges">
      <rect x="0.500" y="0.500" width="742" height="525" fill="#fff" stroke="#000" />
      {Array.from({ length: 59 }, (_, i) => {
        const x = Math.floor(12 + i * 12.5) + 0.5;
        return <path key={x} d={`M${x} 1v524`} stroke="#bdbdbd" strokeDasharray={i % 2 ? '4 2' : '1 1'} />;
      })}
      {Array.from({ length: 42 }, (_, i) => {
        const y = Math.floor(12 + i * 12.5) + 0.5;
        return <path key={y} d={`M1 ${y}h741`} stroke="#bdbdbd" strokeDasharray={i % 2 ? '4 2' : '1 1'} />;
      })}
      <rect x="31" y="479" width="680" height="15" fill="#fff" />
      <path d="M31 479.500h680M96.500 479v15M646.500 479v15" stroke="#000" />
      <rect x="31.500" y="31.500" width="680" height="463" fill="none" stroke="#7fdc83" strokeWidth="2" />
      <rect x="31.500" y="31.500" width="680" height="463" fill="none" stroke="#123f16" strokeDasharray="4 3" />
      <path d="M371.500 12v16" stroke="#3dc445" strokeDasharray="4 2" />
    </g>
    <g className="font-['Liberation_Sans',Arial,sans-serif]" fontSize="7" textAnchor="end" fill="#222">
      <text x="93" y="489">УЗЕЛ:</text>
      <text x="645" y="489">ЗАГОЛОВОК:</text>
      <text x="710" y="489">НОМЕР:</text>
    </g>
    {HANDLES.map(([x, y]) => (
      <rect key={`${x}-${y}`} x={x - 1.5} y={y - 1.5} width="6" height="6" fill="#808080" stroke="#000" />
    ))}
    <circle cx="371.500" cy="7.500" r="4" fill="#808080" stroke="#000" />
  </svg>
);

/* ---------- Shape data dialog ---------- */

const SUNKEN = 'border border-t-[#808080] border-l-[#808080] border-r-white border-b-white shadow-[inset_1px_1px_0_#404040,inset_-1px_-1px_0_#d4d0c8]';

const FIELDS = [
  { id: 'node', label: 'Узел:' },
  { id: 'title', label: 'Заголовок:' },
  { id: 'number', label: 'Номер:' },
];

const ShapeDataDialog = () => (
  <div role="dialog" aria-labelledby="dialog-title" className="absolute left-[215px] top-[143px] w-[424px] border border-b-[#404040] border-l-[#d4d0c8] border-r-[#404040] border-t-[#d4d0c8] bg-[#d4d0c8] p-[2px] shadow-[inset_1px_1px_0_#fff,inset_-1px_-1px_0_#808080]">
    <div className="flex h-[18px] items-center justify-between bg-linear-to-r from-[#0a246a] to-[#a6caf0] pl-[2px] pr-[3px]">
      <h2 id="dialog-title" className="font-bold text-white">Данные фигуры</h2>
      <button aria-label="Закрыть" className={clsx(RAISED, 'flex h-[14px] w-4 items-center justify-center')}><CloseGlyph /></button>
    </div>
    <form className="px-[11px] pb-2 pt-[9px]" onSubmit={(e) => e.preventDefault()}>
      <div className="grid grid-cols-[91px_1fr] items-center gap-y-1">
        {FIELDS.map((field) => (
          <React.Fragment key={field.id}>
            <label htmlFor={field.id}>{field.label}</label>
            <input id={field.id} className={clsx(SUNKEN, 'h-[22px] bg-white px-1 outline-none')} />
          </React.Fragment>
        ))}
        <label htmlFor="margins" className="whitespace-nowrap">Поля страницы:</label>
        <div className="relative h-[21px]">
          <select id="margins" className={clsx(SUNKEN, 'h-full w-full appearance-none bg-white pl-[3px] outline-none')}>
            <option>12,5 мм</option>
          </select>
          <span className={clsx(RAISED, 'pointer-events-none absolute inset-y-[2px] right-[2px] flex w-4 items-center justify-center')}>
            <Arrow />
          </span>
        </div>
      </div>
      <div className="mt-3 flex h-[74px] items-start gap-1">
        <span className="leading-[14px]">Сообщение</span>
        <span className="mt-[7px] h-[2px] flex-1 border-b border-t border-b-white border-t-[#808080]" />
      </div>
      <div className="h-[2px] border-b border-t border-b-white border-t-[#808080]" />
      <div className="mt-[9px] flex h-[23px]">
        <button type="button" aria-label="Справка" className={clsx(RAISED, 'mr-auto flex w-[25px] items-center justify-center')}>
          <svg viewBox="0 0 16 16" className="size-4">
            <path d="M4 14h6.500l2 2v-2h2V4" fill="none" stroke="#777" />
            <path d="M1.500 1.500h12v11h-1v3l-3-3h-8z" fill="#ffffcf" stroke="#000" />
            <text x="7.500" y="11" fontSize="11" fontWeight="bold" textAnchor="middle" fill="#0a0a6a">?</text>
          </svg>
        </button>
        <button type="button" className={clsx(RAISED, 'mr-[14px] w-[100px]')}>Определить...</button>
        <button type="submit" className="mr-2 w-[70px] border border-black">
          <span className={clsx(RAISED, 'flex h-full items-center justify-center')}>ОК</span>
        </button>
        <button type="button" className={clsx(RAISED, 'w-[70px]')}>Отмена</button>
      </div>
    </form>
  </div>
);

const PageTabs = () => (
  <div className="flex h-4 shrink-0">
    <div className="flex min-w-0 flex-1 border-t border-black bg-[#d4d0c8]">
      <div className="flex w-[65px] items-center justify-around">
        <button aria-label="Первая страница" className="flex items-center"><span className="h-[7px] w-px bg-black" /><Arrow dir="left" /></button>
        <button aria-label="Предыдущая страница"><Arrow dir="left" /></button>
        <button aria-label="Следующая страница"><Arrow dir="right" /></button>
        <button aria-label="Последняя страница" className="flex items-center"><Arrow dir="right" /><span className="h-[7px] w-px bg-black" /></button>
      </div>
      <button className="relative h-[15px] w-[94px] pl-[7px] text-left font-bold">
        <svg viewBox="0 0 94 15" className="absolute inset-0 h-[15px] w-[94px]" aria-hidden="true">
          <path d="M.5 0v14.500h79L93 0" fill="#fff" stroke="#000" />
        </svg>
        <span className="relative leading-[14px]">Страница-1</span>
      </button>
    </div>
    <div className={clsx('flex w-1/2', DITHER)}>
      <span className={clsx(RAISED, 'w-[5px]')} />
      <ScrollButton dir="left" label="Прокрутить влево" />
      <div className={clsx(RAISED, 'ml-[23%] w-[250px]')} />
      <span className="flex-1" />
      <ScrollButton dir="right" label="Прокрутить вправо" />
    </div>
    <span className="w-4 bg-[#d4d0c8]" />
  </div>
);

const Workspace = () => (
  <main className="ml-[5px] mr-px mt-px flex min-w-0 flex-1 flex-col border-l border-r border-t border-[#505050] border-r-[#d4d0c8]">
    <div className="flex min-h-0 flex-1">
      <div className="flex min-w-0 flex-1 flex-col">
        <div className="flex h-4 shrink-0">
          <svg viewBox="0 0 16 16" className="size-4 shrink-0 border-b border-r border-black bg-white">
            <path d="M8.500 0v16M0 8.500h16" stroke="#0000c0" strokeDasharray="1 1" />
          </svg>
          <HorizontalRuler />
        </div>
        <div className="flex min-h-0 flex-1">
          <VerticalRuler />
          <div className="relative min-w-0 flex-1 overflow-hidden bg-linear-to-b from-[#8f99b0] to-[#67728b]">
            <DrawingPage />
            <ShapeDataDialog />
            <svg viewBox="0 0 12 20" className="absolute left-[998px] top-[250px] h-5 w-3" aria-hidden="true">
              <path d="M.5 .8v15.500l3.700-3.300 2.800 6 2.300-1-2.600-5.800h4.800z" fill="#fff" stroke="#1d2240" />
            </svg>
          </div>
        </div>
      </div>
      <div className={clsx('flex w-4 flex-col', DITHER)}>
        <ScrollButton dir="up" label="Прокрутить вверх" />
        <span className="flex-[150]" />
        <div className={clsx(RAISED, 'flex-[296]')} />
        <span className="flex-[158]" />
        <ScrollButton dir="down" label="Прокрутить вниз" />
      </div>
    </div>
    <PageTabs />
  </main>
);

const StatusBar = () => (
  <footer className="flex h-6 shrink-0 items-center gap-[5px] border-t border-white bg-linear-to-r from-[#d6d3cb] to-[#f5f4f2] pl-[3px]">
    {[0, 1, 2, 3].map((i) => <span key={i} className="h-4 w-[150px] border border-[#a6a6a6]" />)}
    <span className="ml-auto mr-[18px] h-4 w-[100px] border border-[#a6a6a6]" />
  </footer>
);

/* ---------- Taskbar ---------- */

const TASKS = [
  { icon: 'opera', title: 'visio ms описание для н...' },
  { icon: 'folder', title: 'C:\\Documents and Settin...' },
  { icon: 'word', title: '1 ФУНКЦИОНАЛЬНОЕ М...' },
  { icon: 'visio', title: 'Документ3 - Microso...', active: true },
  { icon: 'word', title: '2 Методика выполнени...' },
  { icon: 'folder', title: 'C:\\Documents and Settin...' },
];

const TRAY = ['trayK', 'trayNet', 'trayOff', 'trayDiamond', 'trayCheck', 'trayClock', 'traySound', 'trayPc'];

const Taskbar = () => (
  <div className="flex h-7 shrink-0 items-center border-t border-white bg-[#d4d0c8] pb-[3px] pl-[2px]">
    <button className={clsx(RAISED, 'mr-[5px] flex h-[22px] w-[51px] items-center gap-px pl-px text-[12px] font-bold')}>
      <Icon name="windows" />Пуск
    </button>
    <div className="flex min-w-0 flex-1 gap-[3px]">
      {TASKS.map((task, i) => (
        <button
          key={i}
          className={clsx(
            'flex h-[22px] w-40 min-w-0 items-center gap-[3px] whitespace-nowrap pl-1',
            task.active ? clsx('border border-b-white border-l-[#404040] border-r-white border-t-[#404040] font-bold', DITHER) : RAISED
          )}
        >
          <Icon name={task.icon} />
          <span>{task.title}</span>
        </button>
      ))}
    </div>
    <span className="mr-1 flex h-4 w-[17px] items-center justify-center bg-[#0a246a] text-white">EN</span>
    <span className="mr-[2px] h-[22px] w-[2px] border-l border-r border-l-[#808080] border-r-white" />
    <div className="flex h-[22px] items-center gap-[2px] border border-b-white border-l-[#808080] border-r-white border-t-[#808080] pl-1 pr-2">
      {TRAY.map((name) => <Icon key={name} name={name} />)}
      <time className="ml-[6px]">15:41</time>
    </div>
  </div>
);

const App: React.FC = () => (
  <div className="flex h-screen flex-col overflow-hidden bg-[#d4d0c8] font-['DejaVu_Sans_Condensed','DejaVu_Sans',Tahoma,sans-serif] text-[11px] leading-[14px] text-black">
    <TitleBar />
    <div className="shrink-0 bg-linear-to-r from-[#d9d6cf] to-[#f5f4f2] to-60%">
      <MenuBar />
      <div className="flex flex-col gap-px pb-px pl-[3px]">
        <StandardToolbar />
        <FormatToolbar />
      </div>
    </div>
    <div className="flex min-h-0 flex-1">
      <ShapesPanel />
      <Workspace />
    </div>
    <StatusBar />
    <Taskbar />
  </div>
);

export default App;
